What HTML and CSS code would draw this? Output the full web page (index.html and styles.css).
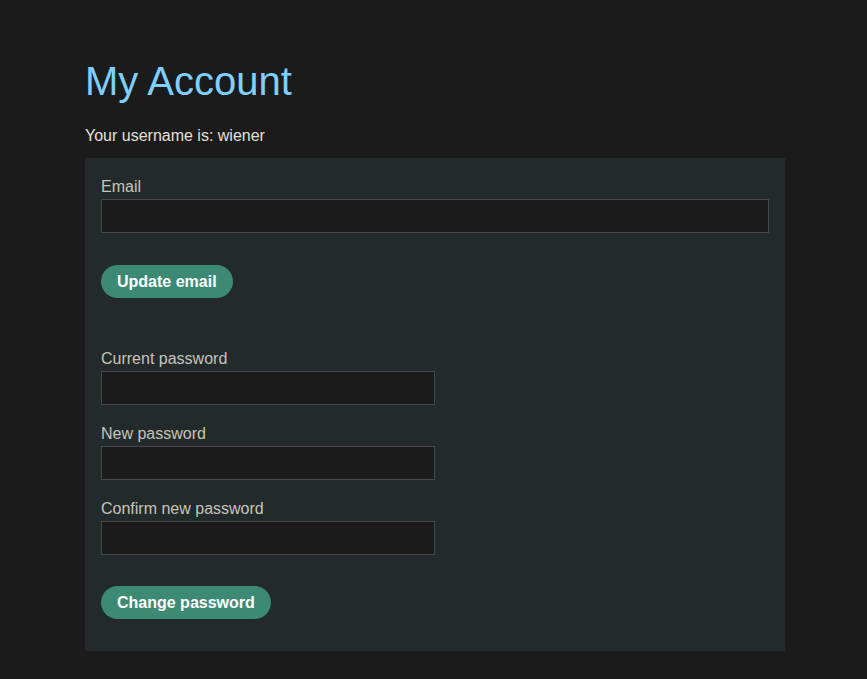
FILE: index.html
```html
<!DOCTYPE html>
<html lang="en">
<head>
<meta charset="utf-8">
<title>My Account</title>
<link rel="stylesheet" href="styles.css">
</head>
<body>
<main class="container">
  <h1 class="title">My Account</h1>
  <p class="username">Your username is: wiener</p>
  <section class="panel">
    <form class="form">
      <label class="label" for="email">Email</label>
      <input class="input input-wide" id="email" type="email">
      <button class="btn btn-email" type="button">Update email</button>
    </form>
    <form class="form form-password">
      <label class="label" for="current">Current password</label>
      <input class="input input-half" id="current" type="password">
      <label class="label" for="new">New password</label>
      <input class="input input-half" id="new" type="password">
      <label class="label" for="confirm">Confirm new password</label>
      <input class="input input-half" id="confirm" type="password">
      <button class="btn btn-password" type="button">Change password</button>
    </form>
  </section>
</main>
</body>
</html>
```
FILE: styles.css
```css
* { box-sizing: border-box; }
html, body {
  margin: 0;
  padding: 0;
  background: #1b1b1b;
  font-family: "Liberation Sans", Arial, sans-serif;
}
.container {
  width: 700px;
  margin-left: 85px;
  padding-top: 57px;
}
.title {
  margin: 0;
  font-size: 40px;
  font-weight: 400;
  line-height: 48px;
  color: #7dd0ff;
}
.username {
  margin: 21px 0 0;
  font-size: 16px;
  line-height: 20px;
  color: #e4e1d9;
}
.panel {
  margin-top: 12px;
  background: #222a2b;
  padding: 18px 16px 32px;
}
.form {
  display: flex;
  flex-direction: column;
  align-items: flex-start;
}
.form-password {
  margin-top: 50px;
}
.label {
  display: block;
  font-size: 16px;
  line-height: 22px;
  color: #c8c4ba;
  margin-bottom: 1px;
}
.input {
  display: block;
  height: 34px;
  background: #1b1b1b;
  border: 1px solid #484848;
  color: #e4e1d9;
  font-size: 16px;
  margin: 0 0 18px;
  padding: 0 8px;
  outline: none;
}
.input-wide { width: 100%; }
.input-half { width: 50%; }
.btn {
  display: block;
  height: 33px;
  padding: 0 16px;
  border: none;
  border-radius: 17px;
  background: #3c8a74;
  color: #ffffff;
  font-family: "Liberation Sans", Arial, sans-serif;
  font-weight: 700;
  font-size: 16px;
  line-height: 33px;
  cursor: pointer;
}
.btn-email { margin-top: 14px; }
.btn-password { margin-top: 13px; }
```
